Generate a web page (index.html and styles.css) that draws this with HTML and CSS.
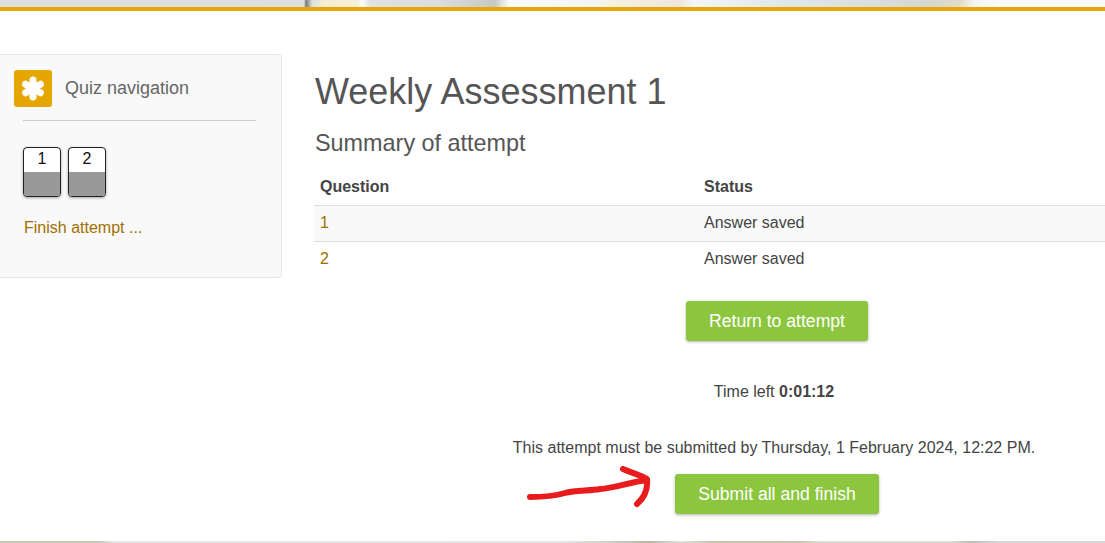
FILE: index.html
```html
<!DOCTYPE html>
<html lang="en">
<head>
<meta charset="utf-8">
<title>Weekly Assessment 1</title>
<link rel="stylesheet" href="styles.css">
</head>
<body>
<div class="strip-top"></div>
<div class="gold-bar"></div>
<div class="page">
  <aside class="nav-block">
    <div class="nav-head">
      <span class="nav-icon">
        <svg width="38" height="37" viewBox="0 0 38 37"><g stroke="#fff" stroke-width="7" stroke-linecap="round"><path d="M19 10v17"/><path d="M11.6 14.2l14.8 8.6"/><path d="M26.4 14.2l-14.8 8.6"/></g></svg>
      </span>
      <h2 class="nav-title">Quiz navigation</h2>
    </div>
    <div class="nav-rule"></div>
    <div class="nav-buttons">
      <a class="qn-btn"><span class="qn-num">1</span><span class="qn-fill"></span></a>
      <a class="qn-btn"><span class="qn-num">2</span><span class="qn-fill"></span></a>
    </div>
    <a class="finish-link link">Finish attempt ...</a>
  </aside>
  <main class="content">
    <h1 class="title">Weekly Assessment 1</h1>
    <h2 class="subtitle">Summary of attempt</h2>
    <table class="summary">
      <thead>
        <tr><th class="col-q">Question</th><th>Status</th></tr>
      </thead>
      <tbody>
        <tr class="odd"><td class="link">1</td><td>Answer saved</td></tr>
        <tr><td class="link">2</td><td>Answer saved</td></tr>
      </tbody>
    </table>
    <div class="actions">
      <button class="btn btn-return">Return to attempt</button>
      <p class="time-left">Time left <b>0:01:12</b></p>
      <p class="deadline">This attempt must be submitted by Thursday, 1 February 2024, 12:22 PM.</p>
      <button class="btn btn-submit">Submit all and finish</button>
    </div>
  </main>
</div>
<div class="strip-bottom"></div>
<svg class="arrow" width="140" height="50" viewBox="0 0 140 50"><g fill="none" stroke="#e81c1c" stroke-width="6" stroke-linecap="round" stroke-linejoin="round"><path d="M3 31C18 31 28 30 38 27C48 24 63 25 73 23C88 22 103 16 120 14"/><path d="M96 3C105 7 113 9 120 13C121 22 118 31 110 38"/></g></svg>
</body>
</html>
```
FILE: styles.css
```css
* { box-sizing: border-box; }
html, body { margin: 0; padding: 0; }
body {
  position: relative;
  width: 1105px;
  height: 543px;
  overflow: hidden;
  background: #fff;
  font-family: "Liberation Sans", Arial, sans-serif;
  font-size: 16px;
  color: #444;
  display: flex;
  flex-direction: column;
}
.strip-top {
  height: 7px;
  flex: none;
  background: linear-gradient(90deg, #dfdfdf 0, #dedede 304px, #777 306px, #ddd 312px, #e4e4e0 318px, #f6ecd0 322px, #f8eed8 358px, #fff 362px, #dfe2df 370px, #dcdedb 440px, #c8c8c4 495px, #fff 510px, #f4f4f4 600px, #f8f3e0 608px, #efe6dc 680px, #f5f7f7 695px, #e0e8ea 780px, #dde2e0 845px, #d5d6d0 930px, #e2dcc8 960px, #f6f6f4 975px, #fff 1000px, #fff 1105px);
}
.gold-bar { height: 4px; flex: none; background: #e5a600; }
.page {
  flex: 1;
  display: flex;
  align-items: flex-start;
  min-height: 0;
  padding-top: 43px;
}
.nav-block {
  flex: none;
  width: 282px;
  height: 224px;
  margin-right: 32px;
  padding: 14px 0 0 14px;
  background: #f9f9f9;
  border: 1px solid #e6e6e6;
  border-left: none;
  border-radius: 0 4px 4px 0;
}
.nav-head { display: flex; align-items: center; gap: 13px; }
.nav-icon {
  width: 38px;
  height: 37px;
  flex: none;
  display: block;
  background: #e5a600;
  border-radius: 3px;
}
.nav-icon svg { display: block; }
.nav-title { margin: 0; font-size: 18px; font-weight: 400; color: #666; line-height: 38px; }
.nav-rule { width: 233px; height: 1px; margin: 13px 0 0 9px; background: #ccc; }
.nav-buttons { display: flex; gap: 7px; margin: 26px 0 0 9px; }
.qn-btn {
  width: 38px;
  height: 50px;
  display: flex;
  flex-direction: column;
  border: 1px solid #222;
  border-radius: 4px;
  overflow: hidden;
  background: #fff;
  box-shadow: 0 1px 3px rgba(0,0,0,.35);
  color: #111;
}
.qn-num { height: 24px; text-align: center; line-height: 21px; font-size: 16px; }
.qn-fill { flex: 1; background: #999; }
.finish-link { display: block; margin: 20px 0 0 10px; line-height: 22px; }
.link { color: #a07000; }
.content { flex: none; width: 926px; padding-top: 0; }
.title { margin: 16px 0 0 1px; font-size: 36px; font-weight: 400; line-height: 44px; color: #555; }
.subtitle { margin: 14px 0 0 1px; font-size: 23.4px; font-weight: 400; line-height: 30px; color: #555; }
.summary { width: 100%; margin-top: 12px; border-collapse: collapse; table-layout: fixed; }
.summary th, .summary td { padding: 0 6px; height: 36px; text-align: left; vertical-align: middle; }
.summary th { font-weight: 700; height: 35px; }
.summary .col-q { width: 384px; }
.summary tbody tr { border-top: 1px solid #ddd; }
.summary tbody td { height: 36px; }
.summary .odd { background: #f9f9f9; }
.actions { display: flex; flex-direction: column; align-items: center; margin-top: 24px; }
.btn {
  display: block;
  height: 40px;
  padding: 0 23px;
  border: none;
  border-radius: 3px;
  background: #8cc63f;
  color: #fff;
  font: 400 17.6px "Liberation Sans", Arial, sans-serif;
  box-shadow: 0 1px 3px rgba(0,0,0,.3);
}
.time-left { margin: 40px 6px 0 0; line-height: 22px; }
.deadline { margin: 34px 6px 0 0; line-height: 22px; white-space: nowrap; }
.btn-submit { margin-top: 15px; }
.strip-bottom {
  height: 2px;
  flex: none;
  background: linear-gradient(90deg, #c8c6b8 0, #c8c6b8 98px, #e8e8e8 115px, #e6e6ea 560px, #d5d5cc 600px, #b8b5a5 650px, #e0e0dc 680px, #c6c4ac 715px, #c8c6b0 800px, #dcddd0 820px, #dcddd0 950px, #c0bdb8 970px, #d8d8d8 1000px, #d8d8d8 1105px);
}
.arrow { position: absolute; left: 527px; top: 466px; }
```
